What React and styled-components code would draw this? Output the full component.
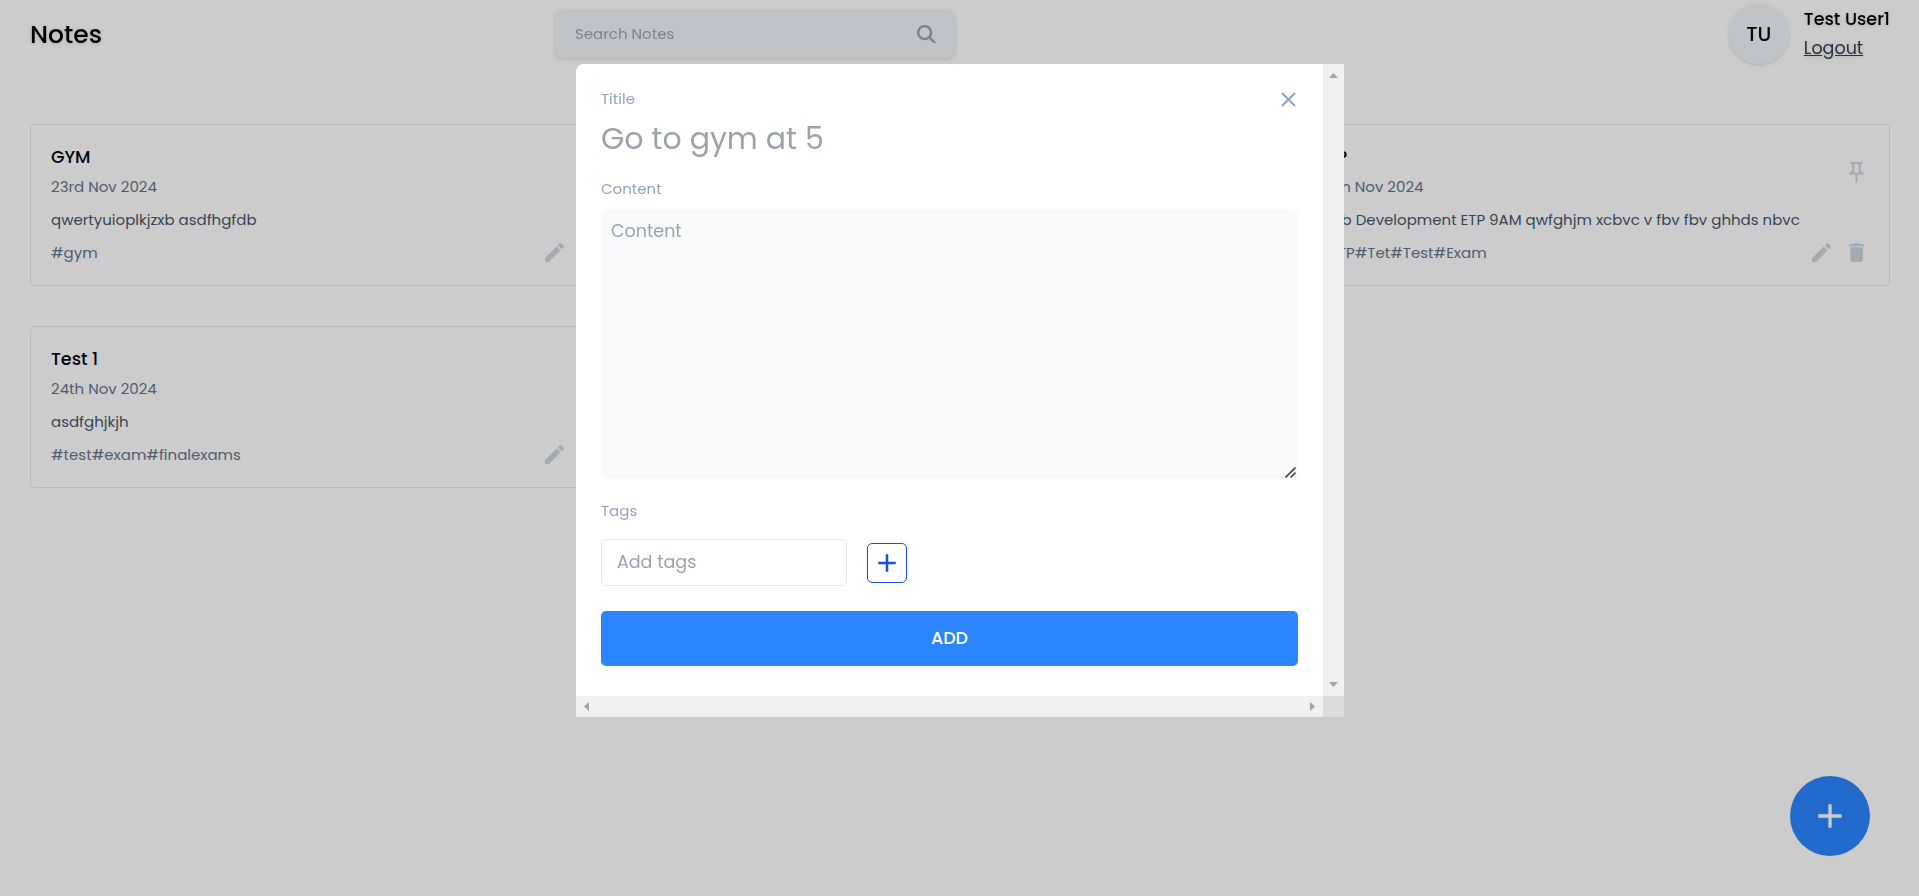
import React from "react";
import styled, { createGlobalStyle } from "styled-components";
import { MdAdd, MdClose, MdCreate, MdDelete, MdOutlinePushPin } from "react-icons/md";
import { FaMagnifyingGlass } from "react-icons/fa6";

const GlobalStyle = createGlobalStyle`
  *, *::before, *::after { box-sizing: border-box; }
  body {
    margin: 0;
    background: #fff;
    font-family: Poppins, Inter, "Liberation Sans", sans-serif;
    overflow: hidden;
  }
  h2, h6, p { margin: 0; font-weight: inherit; }
  button, input, textarea { font-family: inherit; }
  svg { display: block; }
`;

const Page = styled.div`
  min-height: 100vh;
`;

const Header = styled.header`
  display: grid;
  grid-template-columns: 525px 400px 1fr;
  align-items: center;
  height: 68px;
  padding: 0 29px 0 30px;
  filter: drop-shadow(0 1px 2px rgba(0, 0, 0, 0.1)) drop-shadow(0 1px 1px rgba(0, 0, 0, 0.06));
`;

const Brand = styled.h2`
  font-size: 25px;
  font-weight: 500;
  line-height: 35px;
  color: #000;
`;

const SearchBox = styled.div`
  display: flex;
  align-items: center;
  justify-content: space-between;
  height: 48px;
  padding: 0 19px 0 20px;
  border-radius: 7.5px;
  background: #f1f5f9;
  color: #94a3b8;
`;

const SearchInput = styled.input`
  width: 300px;
  padding: 0 0 1px;
  border: 0;
  outline: 0;
  background: transparent;
  font-size: 15px;
  &::placeholder { color: #9ca3af; opacity: 1; }
`;

const Profile = styled.div`
  display: flex;
  align-items: center;
  justify-content: flex-end;
  gap: 15px;
`;

const Avatar = styled.div`
  display: flex;
  align-items: center;
  justify-content: center;
  width: 60px;
  height: 60px;
  border-radius: 50%;
  background: #f1f5f9;
  color: #020617;
  font-size: 20px;
  font-weight: 500;
`;

const UserInfo = styled.div`
  display: flex;
  flex-direction: column;
  align-items: flex-start;
  white-space: nowrap;
`;

const UserName = styled.p`
  font-size: 17.5px;
  font-weight: 500;
  line-height: 28px;
  color: #000;
`;

const Logout = styled.button`
  padding: 0;
  border: 0;
  background: none;
  font-size: 17.5px;
  line-height: 30px;
  color: #334155;
  text-decoration: underline;
`;

const NotesGrid = styled.main`
  display: grid;
  grid-template-columns: repeat(3, 1fr);
  gap: 40px;
  padding: 56px 29px 0 30px;
`;

const Card = styled.article`
  grid-column: ${(p) => p.$column};
  height: 162px;
  padding: 20px;
  border: 1px solid #e5e7eb;
  border-radius: 5px;
  background: #fff;
`;

const CardRow = styled.div`
  display: flex;
  align-items: center;
  justify-content: space-between;
`;

const CardTitle = styled.h6`
  font-size: 17.5px;
  font-weight: 500;
  line-height: 25px;
  color: #020617;
`;

const CardText = styled.p`
  font-size: 15px;
  line-height: 20px;
  color: ${(p) => (p.$strong ? "#475569" : "#64748b")};
  white-space: nowrap;
`;

const CardDate = styled(CardText)`
  padding-top: 4px;
  line-height: 26px;
`;

const CardBody = styled.div`
  margin: 10px 0;
`;

const Actions = styled.div`
  display: flex;
  gap: 10px;
  color: #cbd5e1;
`;

const FloatingAdd = styled.button`
  position: fixed;
  right: 49px;
  bottom: 40px;
  display: flex;
  align-items: center;
  justify-content: center;
  width: 80px;
  height: 80px;
  padding: 0;
  border: 0;
  border-radius: 50%;
  background: #2b85ff;
  color: #fff;
`;

const Overlay = styled.div`
  position: fixed;
  inset: 0;
  display: flex;
  align-items: flex-start;
  justify-content: center;
  padding: 64px 0 0 1px;
  background: rgba(0, 0, 0, 0.2);
`;

const Modal = styled.section`
  display: grid;
  grid-template-columns: 1fr 21px;
  grid-template-rows: 1fr 21px;
  width: 768px;
  height: 653px;
  border-top-left-radius: 7.5px;
  background: #fff;
  overflow: hidden;
`;

const Form = styled.div`
  display: flex;
  flex-direction: column;
  padding: 23px 25px 0;
`;

const FormHead = styled.div`
  display: flex;
  justify-content: space-between;
  height: 25px;
`;

const Label = styled.label`
  font-size: 15px;
  line-height: 20px;
  color: #94a3b8;
`;

const HeadLabel = styled(Label)`
  padding-top: 2px;
`;

const CloseButton = styled.button`
  padding: 0;
  margin-right: -3px;
  border: 0;
  background: none;
  color: #94a3b8;
`;

const TitleInput = styled.input`
  height: 45px;
  margin: 4px 0 18px;
  padding: 0;
  border: 0;
  outline: 0;
  font-size: 30px;
  &::placeholder { color: #9ca3af; opacity: 1; }
`;

const ContentField = styled.div`
  position: relative;
  display: flex;
  margin: 10px 0 22px;
`;

const ContentArea = styled.textarea`
  flex: 1;
  height: 270px;
  padding: 10px;
  border: 0;
  outline: 0;
  border-radius: 5px;
  background: #f8fafc;
  font-size: 17.5px;
  line-height: 25px;
  resize: none;
  &::placeholder { color: #9ca3af; opacity: 1; }
`;

const ResizeGrip = styled.svg`
  position: absolute;
  right: 2px;
  bottom: 1px;
  cursor: nwse-resize;
`;

const TagRow = styled.div`
  display: flex;
  align-items: center;
  gap: 20px;
  margin: 18px 0 25px;
`;

const TagInput = styled.input`
  width: 246px;
  height: 47px;
  padding: 0 15px 1px;
  border: 1px solid #e5e7eb;
  border-radius: 5px;
  outline: 0;
  font-size: 17.5px;
  &::placeholder { color: #9ca3af; opacity: 1; }
`;

const TagButton = styled.button`
  display: flex;
  align-items: center;
  justify-content: center;
  width: 40px;
  height: 40px;
  margin-top: 1px;
  padding: 0;
  border: 1px solid #1d4ed8;
  border-radius: 5px;
  background: none;
  color: #1d4ed8;
`;

const SubmitButton = styled.button`
  height: 55px;
  padding: 0 0 2px;
  border: 0;
  border-radius: 5px;
  background: #2b85ff;
  color: #fff;
  font-size: 17.5px;
  font-weight: 500;
`;

const ScrollTrack = styled.div`
  display: flex;
  flex-direction: ${(p) => (p.$vertical ? "column" : "row")};
  align-items: center;
  justify-content: space-between;
  padding: ${(p) => (p.$vertical ? "9px 0" : "0 8px")};
  background: #f0f0f0;
`;

const ScrollCorner = styled.div`
  background: #dcdcdc;
`;

const arrows = {
  up: [9, 5, "0,5 4.5,0 9,5"],
  down: [9, 5, "0,0 9,0 4.5,5"],
  left: [5, 9, "5,0 5,9 0,4.5"],
  right: [5, 9, "0,0 5,4.5 0,9"],
};

function Arrow({ direction }) {
  const [width, height, points] = arrows[direction];
  return (
    <svg width={width} height={height}>
      <polygon points={points} fill="#a3a3a3" />
    </svg>
  );
}

const notes = [
  { title: "GYM", date: "23rd Nov 2024", content: "qwertyuioplkjzxb asdfhgfdb", tags: "#gym", column: 1 },
  { title: "ETP", date: "24th Nov 2024", content: "Web Development ETP 9AM qwfghjm xcbvc v fbv fbv ghhds nbvc", tags: "#ETP#Tet#Test#Exam", column: 3 },
  { title: "Test 1", date: "24th Nov 2024", content: "asdfghjkjh", tags: "#test#exam#finalexams", column: 1 },
];

function NoteCard({ note }) {
  return (
    <Card $column={note.column}>
      <CardRow>
        <div>
          <CardTitle>{note.title}</CardTitle>
          <CardDate>{note.date}</CardDate>
        </div>
        <Actions>
          <MdOutlinePushPin size={25} />
        </Actions>
      </CardRow>
      <CardBody>
        <CardText $strong>{note.content}</CardText>
      </CardBody>
      <CardRow>
        <CardText>{note.tags}</CardText>
        <Actions>
          <MdCreate size={25} />
          <MdDelete size={25} />
        </Actions>
      </CardRow>
    </Card>
  );
}

export default function App() {
  return (
    <Page>
      <GlobalStyle />
      <Header>
        <Brand>Notes</Brand>
        <SearchBox>
          <SearchInput placeholder="Search Notes" />
          <FaMagnifyingGlass size={18.75} />
        </SearchBox>
        <Profile>
          <Avatar>TU</Avatar>
          <UserInfo>
            <UserName>Test User1</UserName>
            <Logout>Logout</Logout>
          </UserInfo>
        </Profile>
      </Header>
      <NotesGrid>
        {notes.map((note) => (
          <NoteCard key={note.title} note={note} />
        ))}
      </NotesGrid>
      <FloatingAdd>
        <MdAdd size={40} />
      </FloatingAdd>
      <Overlay>
        <Modal>
          <Form>
            <FormHead>
              <HeadLabel>Titile</HeadLabel>
              <CloseButton>
                <MdClose size={25} />
              </CloseButton>
            </FormHead>
            <TitleInput placeholder="Go to gym at 5" />
            <Label>Content</Label>
            <ContentField>
              <ContentArea placeholder="Content" />
              <ResizeGrip width="11" height="11" fill="none" stroke="#484848" strokeWidth="1.6">
                <path d="M0.5 10.5 10.5 0.5M5.5 10.5 10.5 5.5" />
              </ResizeGrip>
            </ContentField>
            <Label>Tags</Label>
            <TagRow>
              <TagInput placeholder="Add tags" />
              <TagButton>
                <MdAdd size={30} />
              </TagButton>
            </TagRow>
            <SubmitButton>ADD</SubmitButton>
          </Form>
          <ScrollTrack $vertical>
            <Arrow direction="up" />
            <Arrow direction="down" />
          </ScrollTrack>
          <ScrollTrack>
            <Arrow direction="left" />
            <Arrow direction="right" />
          </ScrollTrack>
          <ScrollCorner />
        </Modal>
      </Overlay>
    </Page>
  );
}
